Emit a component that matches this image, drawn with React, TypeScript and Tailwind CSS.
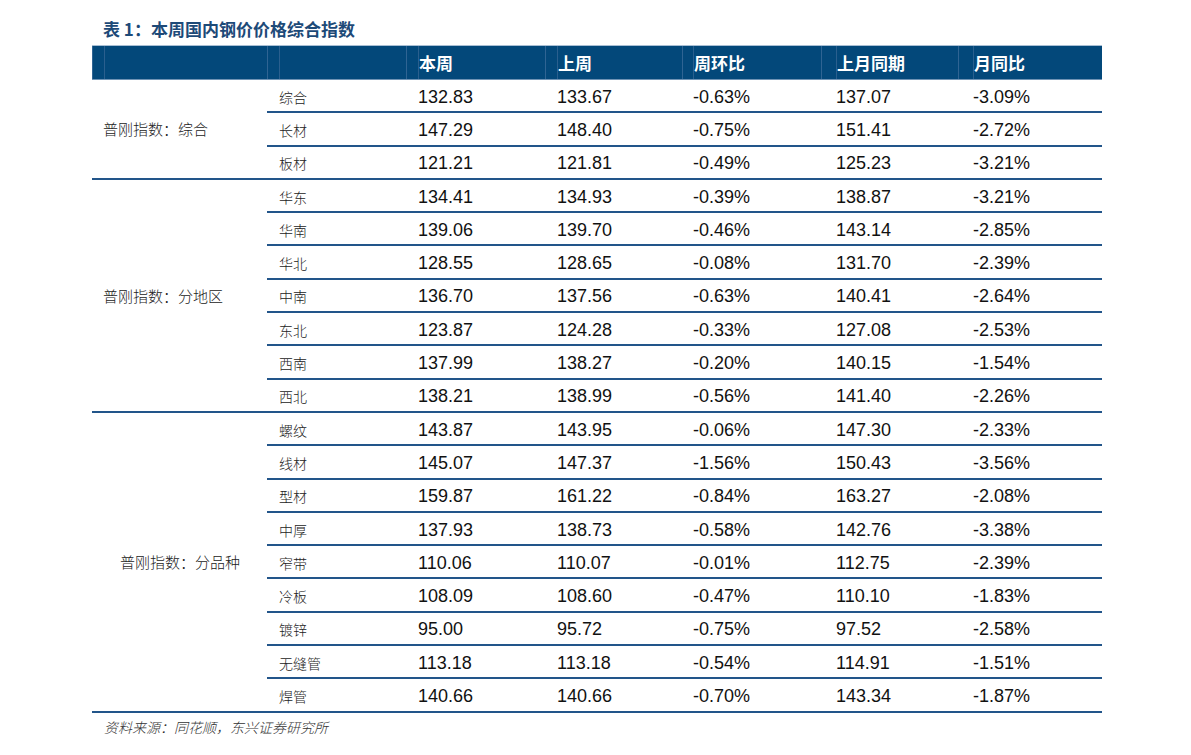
const cols = [
  { w: "w-[175px]", pad: "pl-[11px]" },
  { w: "w-[139px]", pad: "pl-[11px]" },
  { w: "w-[139px]", pad: "pl-[11px]" },
  { w: "w-[137px]", pad: "pl-[11px]" },
  { w: "w-[139px]", pad: "pl-[10px]" },
  { w: "w-[137px]", pad: "pl-[14px]" },
  { w: "w-[144px]", pad: "pl-[14px]" },
];

const headers = ["", "", "本周", "上周", "周环比", "上月同期", "月同比"];

const groups = [
  {
    label: "普刚指数：综合",
    pad: "pl-[11px]",
    rows: [
      ["综合", "132.83", "133.67", "-0.63%", "137.07", "-3.09%"],
      ["长材", "147.29", "148.40", "-0.75%", "151.41", "-2.72%"],
      ["板材", "121.21", "121.81", "-0.49%", "125.23", "-3.21%"],
    ],
  },
  {
    label: "普刚指数：分地区",
    pad: "pl-[11px]",
    rows: [
      ["华东", "134.41", "134.93", "-0.39%", "138.87", "-3.21%"],
      ["华南", "139.06", "139.70", "-0.46%", "143.14", "-2.85%"],
      ["华北", "128.55", "128.65", "-0.08%", "131.70", "-2.39%"],
      ["中南", "136.70", "137.56", "-0.63%", "140.41", "-2.64%"],
      ["东北", "123.87", "124.28", "-0.33%", "127.08", "-2.53%"],
      ["西南", "137.99", "138.27", "-0.20%", "140.15", "-1.54%"],
      ["西北", "138.21", "138.99", "-0.56%", "141.40", "-2.26%"],
    ],
  },
  {
    label: "普刚指数：分品种",
    pad: "pl-[28px]",
    rows: [
      ["螺纹", "143.87", "143.95", "-0.06%", "147.30", "-2.33%"],
      ["线材", "145.07", "147.37", "-1.56%", "150.43", "-3.56%"],
      ["型材", "159.87", "161.22", "-0.84%", "163.27", "-2.08%"],
      ["中厚", "137.93", "138.73", "-0.58%", "142.76", "-3.38%"],
      ["窄带", "110.06", "110.07", "-0.01%", "112.75", "-2.39%"],
      ["冷板", "108.09", "108.60", "-0.47%", "110.10", "-1.83%"],
      ["镀锌", "95.00", "95.72", "-0.75%", "97.52", "-2.58%"],
      ["无缝管", "113.18", "113.18", "-0.54%", "114.91", "-1.51%"],
      ["焊管", "140.66", "140.66", "-0.70%", "143.34", "-1.87%"],
    ],
  },
];

// data column left offsets (text start minus column start)
const dataPad = ["pl-[12px]", "pl-[12px]", "pl-[12px]", "pl-[11px]", "pl-[15px]", "pl-[15px]"];

const sans = "font-['Noto_Sans_CJK_SC',sans-serif]";
const num = "font-['Liberation_Sans','Noto_Sans_CJK_SC',sans-serif]";

function HeaderBar() {
  return (
    <div className="flex h-[35px] border-t border-[#a9bfd4] border-b border-b-[#6f93b5] bg-[#03487a]">
      {cols.map((c, i) => (
        <div key={i} className={`${c.w} h-full border-l border-[#2f6493]`}>
          <div
            className={`flex h-full items-center ${c.pad} text-[17px] font-bold text-white ${sans}`}
          >
            <span className="flex h-full items-center border-l border-[#2a5f8e] pr-[10px]">
              {headers[i]}
            </span>
          </div>
        </div>
      ))}
    </div>
  );
}

function Group({ label, pad, rows }: { label: string; pad: string; rows: string[][] }) {
  return (
    <div className="flex border-b-2 border-[#22558a]">
      <div className={`flex w-[175px] items-center pt-[1px] ${pad} text-[15px] font-light text-[#222] ${sans}`}>
        {label}
      </div>
      <div className="flex flex-col">
        {rows.map((r, ri) => (
          <div
            key={ri}
            className={`flex items-center pt-[3px] ${
              ri < rows.length - 1 ? "h-[33.3px] border-b-2 border-[#22558a]" : "h-[31.3px]"
            }`}
          >
            {r.map((v, ci) => (
              <div
                key={ci}
                className={`${cols[ci + 1].w} ${dataPad[ci]} ${
                  ci === 0
                    ? `text-[14px] font-light text-[#222] ${sans}`
                    : `text-[18px] text-[#111] ${num}`
                }`}
              >
                {v}
              </div>
            ))}
          </div>
        ))}
      </div>
    </div>
  );
}

export default function App() {
  return (
    <div className="h-[755px] w-[1191px] bg-white pl-[92px] pt-[16px]">
      <h1 className={`pl-[11px] text-[17px] font-bold leading-[26px] text-[#1d4a78] ${sans}`}>
        表 1：本周国内钢价价格综合指数
      </h1>
      <div className="mt-[3px] w-[1010px]">
        <HeaderBar />
        {groups.map((g) => (
          <Group key={g.label} {...g} />
        ))}
      </div>
      <p className={`mt-[4px] pl-[12px] text-[14px] italic font-light text-[#333] ${sans}`}>
        资料来源：同花顺，东兴证券研究所
      </p>
    </div>
  );
}
